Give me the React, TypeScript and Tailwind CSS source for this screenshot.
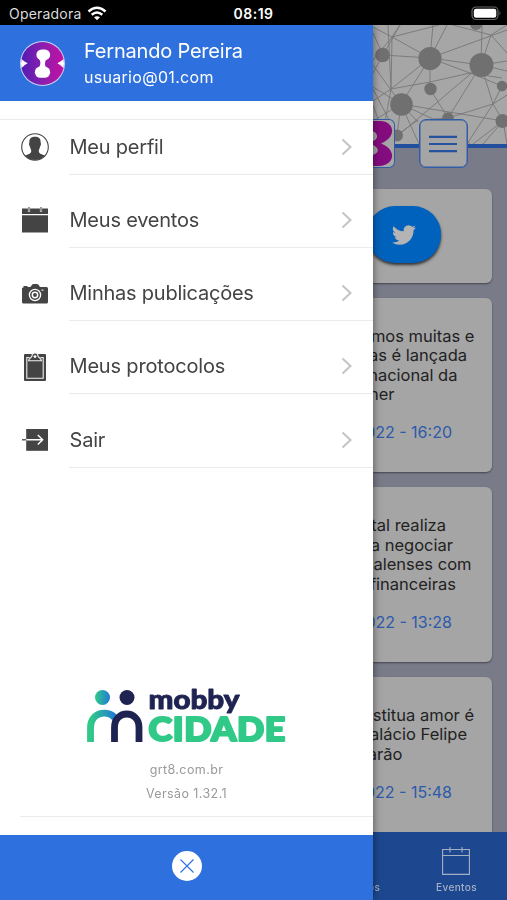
import React from "react";

function Emblem({ id }: { id: string }) {
  return (
    <svg viewBox="0 0 44 44" className="h-full w-full">
      <defs>
        <linearGradient id={id} x1="0" y1="0" x2="1" y2="0">
          <stop offset="0" stopColor="#4f1cb4" />
          <stop offset="0.5" stopColor="#8a1fae" />
          <stop offset="1" stopColor="#c80fa0" />
        </linearGradient>
        <clipPath id={id + "c"}>
          <circle cx="22" cy="22" r="21" />
        </clipPath>
      </defs>
      <circle cx="22" cy="22" r="22" fill="#c9d3f5" />
      <g clipPath={`url(#${id}c)`}>
        <rect width="44" height="44" fill={`url(#${id})`} />
        <path d="M0 16Q3 20 7.500 21.800Q3 24 0 28ZM44 16Q41 20 36.500 21.800Q41 24 44 28Z" fill="#fff" />
        <rect x="16" y="8.200" width="13.500" height="10.500" rx="5.200" fill="#fff" />
        <rect x="14.500" y="25" width="15" height="11" rx="5.500" fill="#fff" />
        <path d="M18.500 17.500C20.500 19.500 20.500 23.500 18 26.500H26C23.800 23.500 24 19.500 26.500 17.500Z" fill="#fff" />
      </g>
    </svg>
  );
}

function ProfileIcon() {
  return (
    <svg viewBox="0 0 28 28" className="h-7 w-7">
      <circle cx="14" cy="14" r="13.300" fill="#fff" stroke="#444" strokeWidth="1.100" />
      <path
        d="M14 3.800C18 3.800 20 6 19.600 9.800C20.300 10.300 20 12.300 19.200 13.300C18.800 15.300 18 16.500 17.800 17.500C17.700 20.500 19.500 21 24 22.500C19 28.500 9 28.500 4 22.500C8.500 21 10.300 20.500 10.200 17.500C10 16.500 9.200 15.300 8.800 13.300C8 12.300 7.700 10.300 8.400 9.800C8 6 10 3.800 14 3.800Z"
        fill="#444"
      />
    </svg>
  );
}

function EventsIcon() {
  return (
    <svg viewBox="0 0 28 28" className="h-7 w-7">
      <path d="M1 2.500H27V8H1ZM1 9.300H27V26.500H1Z" fill="#444" />
      <path d="M8 1V6M20 1V6" stroke="#ddd" strokeWidth="2.200" />
      <path d="M8 1V5.500M20 1V5.500" stroke="#555" strokeWidth="1" />
    </svg>
  );
}

function CameraIcon() {
  return (
    <svg viewBox="0 0 28 28" className="h-7 w-7">
      <path
        d="M2.500 7.500V6H6.500V7H8.500Q10 7 10.500 5.500Q11 4 12.500 4H16Q17.500 4 18 5.500Q18.500 7 20 7H25.500Q27 7 27 8.500V22Q27 23.500 25.500 23.500H2.500Q1 23.500 1 22V8.500Q1 7.500 2.500 7.500Z"
        fill="#444"
      />
      <circle cx="14" cy="15" r="5.600" fill="none" stroke="#fff" strokeWidth="1.300" />
      <circle cx="14" cy="15" r="2.700" fill="none" stroke="#fff" strokeWidth="1.500" />
      <rect x="20.500" y="9.500" width="2" height="1.300" fill="#ddd" />
    </svg>
  );
}

function ClipboardIcon() {
  return (
    <svg viewBox="0 0 28 28" className="h-7 w-7">
      <rect x="3" y="1" width="22" height="27" rx="1" fill="#444" />
      <path d="M8.500 4.500H5.800V25.300H22.200V4.500H19.500" fill="none" stroke="#eee" strokeWidth="1.100" />
      <path
        d="M7.500 7.800C8 4.500 10.500 5 11 3A3 3 0 0 1 17 3C17.500 5 20 4.500 20.500 7.800Z"
        fill="#444"
        stroke="#eee"
        strokeWidth="1.100"
      />
      <circle cx="14" cy="3.600" r="1.400" fill="#fff" />
    </svg>
  );
}

function ExitIcon() {
  return (
    <svg viewBox="0 0 28 28" className="h-7 w-7">
      <rect x="5.200" y="3" width="21.800" height="21.800" fill="#444" />
      <path d="M1 13.800H6" stroke="#444" strokeWidth="1.300" />
      <path d="M5.200 13.800H21.500M16.800 9L21.700 13.800L16.800 18.600" fill="none" stroke="#fff" strokeWidth="1.400" />
    </svg>
  );
}

const nodes = [
  [9.5, 30, 7.3], [57, 33.5, 11.6], [108.5, 40, 12], [57.5, 64, 6.2],
  [28.5, 79.5, 11.3], [129, 61, 5.2], [129.5, 96, 7], [75, 93, 5.8], [24, 110.5, 6], [103, -1, 6],
];

function Network() {
  return (
    <svg viewBox="0 0 134 119" className="block h-[119px] w-[134px] shrink-0 bg-[#a6a6a6]">
      <path
        d="M10 30L0 8M10 30L27 0M10 30L57 33L108 40L134 46M10 30L0 48M57 33L60 0M57 33L74 0M57 33L19 12L0 2M57 33L134 5M57 33L18 64L0 76M57 33L28 79M57 33L57 64L75 93M57 33L97 48L129 61M108 40L109 0M108 40L134 36M108 40L118 10L134 0M118 10L80 0M118 10L134 28M108 40L28 108M108 40L75 93M108 40L120 79L130 96M129 61L120 79L75 93M129 53L97 48L57 57L18 64M28 79L0 40M28 79L0 96M28 79L24 110M28 79L45 97M28 79L60 94L75 93M28 79L130 96M18 64L19 12L27 0M18 64L15 0M18 64L8 119M0 64L24 110L0 100M24 110L45 95M75 93L97 119M130 96L100 119M130 96L110 119M120 79L94 119M134 70L120 79M19 12L0 35M19 12L66 0M0 62L28 79L46 119M130 96L134 119M0 80L14 119M8 94L0 119"
        fill="none"
        stroke="#777"
        strokeWidth="0.900"
      />
      {nodes.map(([x, y, r], i) => (
        <circle key={i} cx={x} cy={y} r={r} fill="#707070" />
      ))}
    </svg>
  );
}

function MobbyLogo() {
  return (
    <svg viewBox="0 0 202 58" className="h-[58px] w-[202px] overflow-visible">
      <defs>
        <linearGradient id="teal" x1="0" x2="1">
          <stop offset="0" stopColor="#31c987" />
          <stop offset="1" stopColor="#207bd8" />
        </linearGradient>
      </defs>
      <circle cx="16.500" cy="8.500" r="7.500" fill="url(#teal)" />
      <circle cx="41" cy="8.500" r="7.500" fill="#1e2352" />
      <path d="M4.500 53V38.500C4.500 22 25 20 30 31" fill="none" stroke="url(#teal)" strokeWidth="6.800" />
      <path d="M28.500 53V38.500C28.500 20.500 53 20.500 53 38.500V53" fill="none" stroke="#1e2352" strokeWidth="6.800" />
      <text
        x="62.500" y="19.500" textLength="91" lengthAdjust="spacingAndGlyphs"
        className="font-['Lato',sans-serif] text-[26px] font-black"
        fill="#1e2352" stroke="#1e2352" strokeWidth="0.900" strokeLinejoin="round"
      >
        mobby
      </text>
      <text
        x="62.500" y="52.300" textLength="137.500" lengthAdjust="spacingAndGlyphs"
        className="font-['Lato',sans-serif] text-[33px] font-black tracking-[0.6px]"
        fill="#31c987" stroke="#31c987" strokeWidth="2.200" strokeLinejoin="round"
      >
        CIDADE
      </text>
    </svg>
  );
}

const items = [
  { label: "Meu perfil", icon: <ProfileIcon />, row: "h-[55px]", track: "tracking-[-0.22px]" },
  { label: "Meus eventos", icon: <EventsIcon />, row: "h-[73.3px] pt-[18.3px]", track: "tracking-[-0.22px]" },
  { label: "Minhas publicações", icon: <CameraIcon />, row: "h-[73.3px] pt-[18.3px]", track: "tracking-[-0.24px]" },
  { label: "Meus protocolos", icon: <ClipboardIcon />, row: "h-[73.3px] pt-[18.3px]", track: "tracking-[-0.18px]" },
  { label: "Sair", icon: <ExitIcon />, row: "h-[73.3px] pt-[18.3px]", track: "tracking-[-0.18px]" },
];

const posts = [
  {
    lines: [["mos muitas e", "pr-[17.5px]"], ["as é lançada", "pr-[25px]"], ["nacional da", "pr-[34.5px]"], ["her", "pr-[97.5px]"]],
    date: "022 - 16:20",
    box: "h-[174.5px]",
  },
  {
    lines: [["tal realiza", "pr-[46px]"], ["a negociar", "pr-[39px]"], ["alenses com", "pr-[20.5px]"], ["financeiras", "pr-[36px]"]],
    date: "022 - 13:28",
    box: "h-[174.5px]",
  },
  {
    lines: [["stitua amor é", "pr-[18px]"], ["alácio Felipe", "pr-[25px]"], ["arão", "pr-[89.5px]"]],
    date: "022 - 15:48",
    box: "h-[190px]",
  },
];

export default function App() {
  return (
    <div className="flex h-[900px] w-[507px] flex-col overflow-hidden bg-white font-['Inter','Liberation_Sans',sans-serif]">
      <div className="grid h-[25px] shrink-0 grid-cols-3 items-center bg-black pt-[3px] text-white">
        <div className="flex items-center gap-[6px] pl-[9px]">
          <span className="text-[14px] leading-4 tracking-[0.2px] text-[#ddd]">Operadora</span>
          <svg viewBox="0 0 20 15" className="-mt-[2px] h-[15px] w-5" fill="none" stroke="#fff" strokeWidth="2.500">
            <path d="M1.500 5.500Q10-2 18.500 5.500M4.700 8.800Q10 4.200 15.300 8.800" />
            <path d="M7 11.300Q10 9 13 11.300L10 14.200Z" fill="#fff" stroke="none" />
          </svg>
        </div>
        <span className="text-center text-[14px] font-semibold leading-4 tracking-[0.5px]">08:19</span>
        <div className="-mt-[2px] flex justify-end pr-[5px]">
          <svg viewBox="0 0 31 15" className="h-[15px] w-[31px]">
            <rect x="1" y="1" width="26" height="12.500" rx="4" fill="none" stroke="#666" strokeWidth="1.200" />
            <rect x="2.800" y="2.800" width="22.500" height="9" rx="2.300" fill="#fff" />
            <path d="M28.500 5V9.500Q30.500 7.200 28.500 5Z" fill="#666" />
          </svg>
        </div>
      </div>

      <div className="flex min-h-0 flex-1">
        <aside className="z-10 flex w-[373px] shrink-0 flex-col bg-white shadow-[0_0_8px_rgba(0,0,0,0.5)]">
          <header className="flex h-[76px] shrink-0 items-center bg-[#2d70de] pl-5 text-white">
            <div className="h-[45px] w-[45px]"><Emblem id="avatar" /></div>
            <div className="ml-[19px] flex flex-col">
              <span className="mt-[1px] text-[20px] leading-6 tracking-[-0.2px]">Fernando Pereira</span>
              <span className="mt-[2px] text-[16px] leading-6 tracking-[0.3px]">usuario@01.com</span>
            </div>
          </header>

          <nav className="mt-[17.5px] border-t border-[#ebebeb]">
            {items.map((it) => (
              <div key={it.label} className={`flex pl-[21px] ${it.row}`}>
                <div className="flex w-12 items-center">{it.icon}</div>
                <div className="flex flex-1 items-center justify-between border-b border-[#ebebeb] pr-5">
                  <span className={`pl-[0.5px] text-[20px] leading-6 text-[#444] ${it.track}`}>{it.label}</span>
                  <svg viewBox="0 0 12 18" className="h-[18px] w-3" fill="none" stroke="#c4c4c4" strokeWidth="2">
                    <path d="M1.500 1.500L9.500 9L1.500 16.500" />
                  </svg>
                </div>
              </div>
            ))}
          </nav>

          <div className="mt-auto flex flex-col items-center">
            <MobbyLogo />
            <span className="mt-[15px] text-[12.5px] leading-4 tracking-[0.4px] text-[#999]">grt8.com.br</span>
            <span className="mt-2 text-[12.5px] leading-4 tracking-[0.4px] text-[#999]">Versão 1.32.1</span>
          </div>
          <div className="ml-5 mt-[14px] h-[19px] shrink-0 border-t border-[#ebebeb]" />
          <footer className="flex h-[65px] shrink-0 items-center justify-center bg-[#2d70de] pb-[3px]">
            <svg viewBox="0 0 30 30" className="h-[30px] w-[30px]">
              <circle cx="15" cy="15" r="15" fill="#fff" />
              <path d="M8.500 8.500L21.500 21.500M21.500 8.500L8.500 21.500" stroke="#2d70de" strokeWidth="1.100" />
            </svg>
          </footer>
        </aside>

        <main className="flex w-[134px] shrink-0 flex-col overflow-hidden bg-[#797b89]">
          <Network />
          <div className="h-[3.5px] shrink-0 bg-[#22509f]" />
          <div className="z-[1] -mt-[28.5px] flex h-[49px] shrink-0 gap-[23.5px]">
            <div className="flex w-[22px] justify-end overflow-hidden rounded-r-[6px] border border-l-0 border-[#315da6] bg-[#a5a5a5]">
              <svg viewBox="0 0 22 47" className="h-[47px] w-[22px] shrink-0">
                <path d="M0 1H7C22 0 26 17 9 23.500C26 30 22 46 7 46H0V35C7 34 8 28 1 25V21C7 19 6 12 0 11Z" fill="#850c7f" />
              </svg>
            </div>
            <div className="flex w-[49px] items-center justify-center rounded-[7px] border border-[#315da6] bg-[#a5a5a5] shadow-[inset_0_0_0_0.5px_#315da6]">
              <svg viewBox="0 0 28 18" className="h-[18px] w-7" fill="none" stroke="#25529e" strokeWidth="2.200">
                <path d="M0 1.800H28M0 9H28M0 16.200H28" />
              </svg>
            </div>
          </div>

          <section className="mt-[21px] flex h-[93.5px] w-[119px] shrink-0 items-center rounded-r-[6px] bg-[#a5a5a5] shadow-[0_1px_2px_rgba(0,0,0,0.45)]">
            <div className="-ml-[6px] -mt-[2px] flex h-[57px] w-[74px] items-center justify-center rounded-[28px] bg-[#0062bc] shadow-[0_2px_3px_rgba(0,0,0,0.7)]">
              <svg viewBox="0 0 24 24" className="h-6 w-6" fill="#b4b4b4">
                <path d="M23.950 4.570a10 10 0 0 1-2.820.770 4.960 4.960 0 0 0 2.160-2.720 9.900 9.900 0 0 1-3.120 1.180 4.920 4.920 0 0 0-8.380 4.480A13.930 13.930 0 0 1 1.640 3.160a4.920 4.920 0 0 0 1.520 6.570 4.900 4.900 0 0 1-2.230-.610v.060a4.920 4.920 0 0 0 3.950 4.830 5 5 0 0 1-2.210.080 4.940 4.940 0 0 0 4.600 3.420A9.870 9.870 0 0 1 0 19.540a13.990 13.990 0 0 0 7.550 2.210c9.050 0 14-7.500 14-13.990 0-.210 0-.420-.020-.630a9.940 9.940 0 0 0 2.460-2.550z" />
              </svg>
            </div>
          </section>

          {posts.map((p) => (
            <article key={p.date} className={`mt-[15px] w-[119px] shrink-0 rounded-r-[6px] bg-[#a5a5a5] pt-[29px] shadow-[0_1px_2px_rgba(0,0,0,0.45)] ${p.box}`}>
              {p.lines.map(([t, pr]) => (
                <div key={t} className={`flex justify-end whitespace-nowrap text-[16.5px] leading-[19.5px] text-[#222] ${pr}`}>{t}</div>
              ))}
              <div className="mt-[17.5px] flex justify-end whitespace-nowrap pr-10 text-[16px] leading-5 text-[#2c5aab]">{p.date}</div>
            </article>
          ))}

          <div className="fixed bottom-0 left-[373px] flex h-[68px] w-[134px] items-end bg-[#1d4890] pb-[7px] text-[10px] font-medium leading-3 tracking-[0.4px] text-[#a5b0c4]">
            <span className="w-[63px] -indent-[5px]">os</span>
            <div className="flex flex-col items-center gap-[6px]">
              <svg viewBox="0 0 28 28" className="-ml-[2px] h-7 w-7" fill="none" stroke="#a5b0c4" strokeWidth="1.100">
                <path d="M.600 2.500H27.400V27.400H.600ZM.600 8.500H27.400M8 0V5.500M20 0V5.500" />
              </svg>
              <span>Eventos</span>
            </div>
          </div>
        </main>
      </div>
    </div>
  );
}
